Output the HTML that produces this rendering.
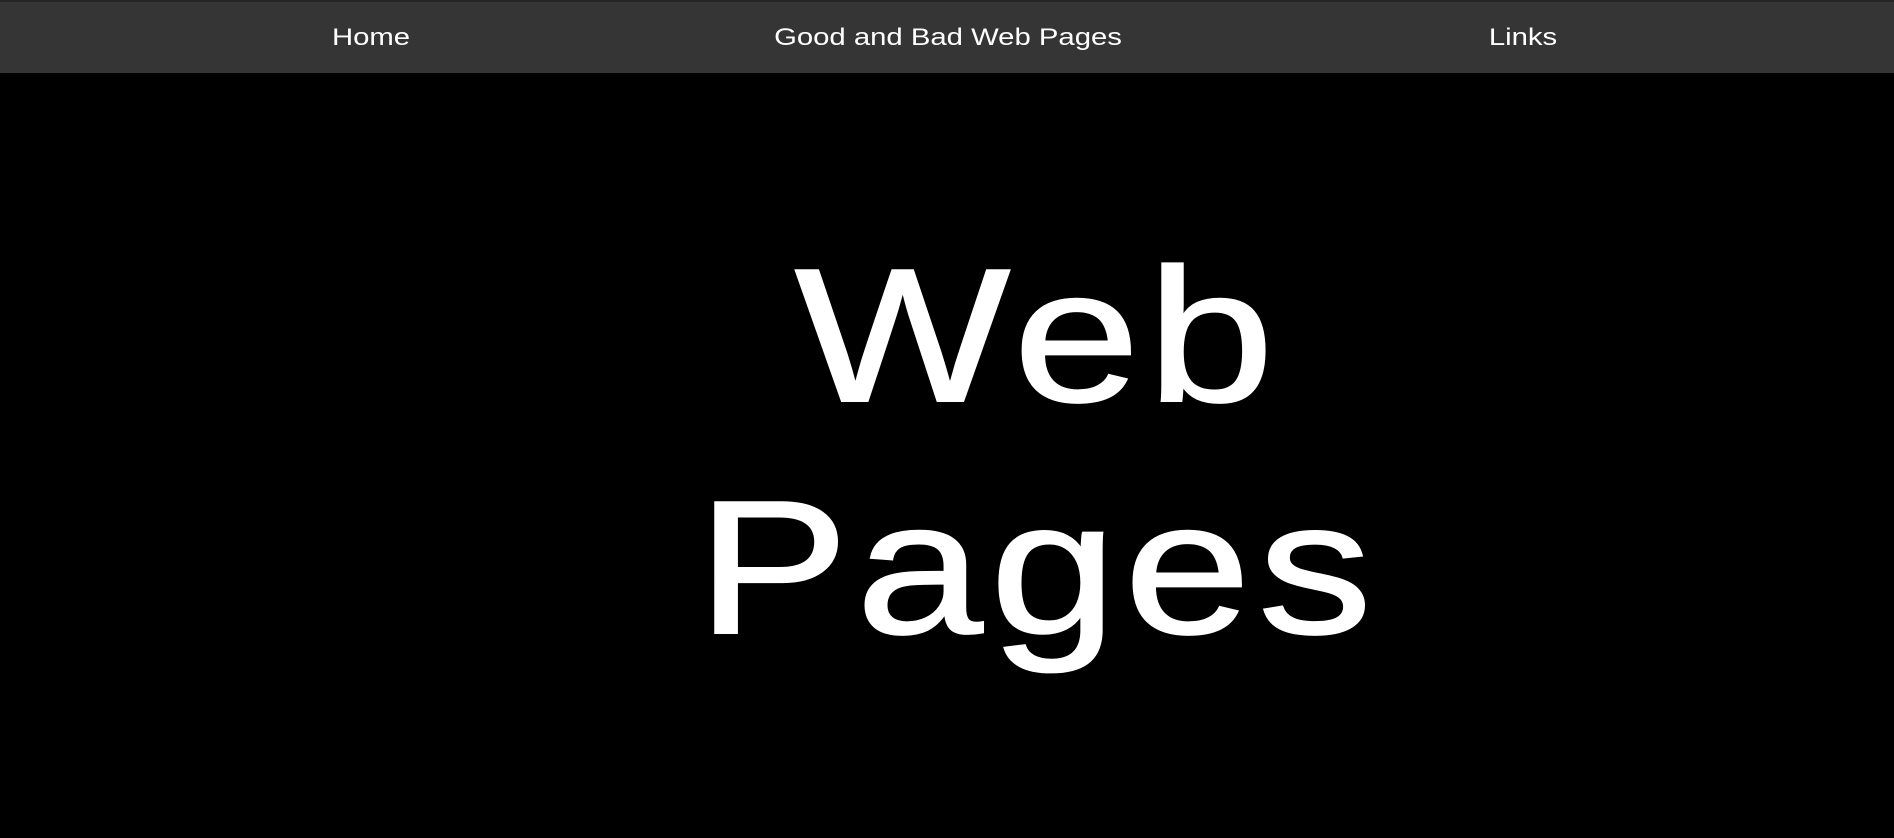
<!DOCTYPE html>
<html><head><style>
html,body{margin:0;padding:0;background:#000;width:1894px;height:838px;overflow:hidden}
.top{position:absolute;left:0;top:0;width:1894px;height:2px;background:#262626}
.nav{position:absolute;left:0;top:2px;width:1894px;height:71px;background:#353535}
.nav span{position:absolute;top:22px;color:#fff;font:24px "Liberation Sans",sans-serif;transform:translateX(-50%) scaleX(1.22);white-space:nowrap}
.big{position:absolute;left:1038px;top:220px;color:#fff;font:190px/232px "Liberation Sans",sans-serif;letter-spacing:6px;-webkit-text-stroke:2px #fff;text-align:center;transform:translateX(-50%) scaleX(1.2);white-space:nowrap}
</style></head><body>
<div class="top"></div>
<div class="nav">
<span style="left:371px">Home</span>
<span style="left:948px">Good and Bad Web Pages</span>
<span style="left:1523px">Links</span>
</div>
<div class="big">Web<br>Pages</div>
</body></html>
